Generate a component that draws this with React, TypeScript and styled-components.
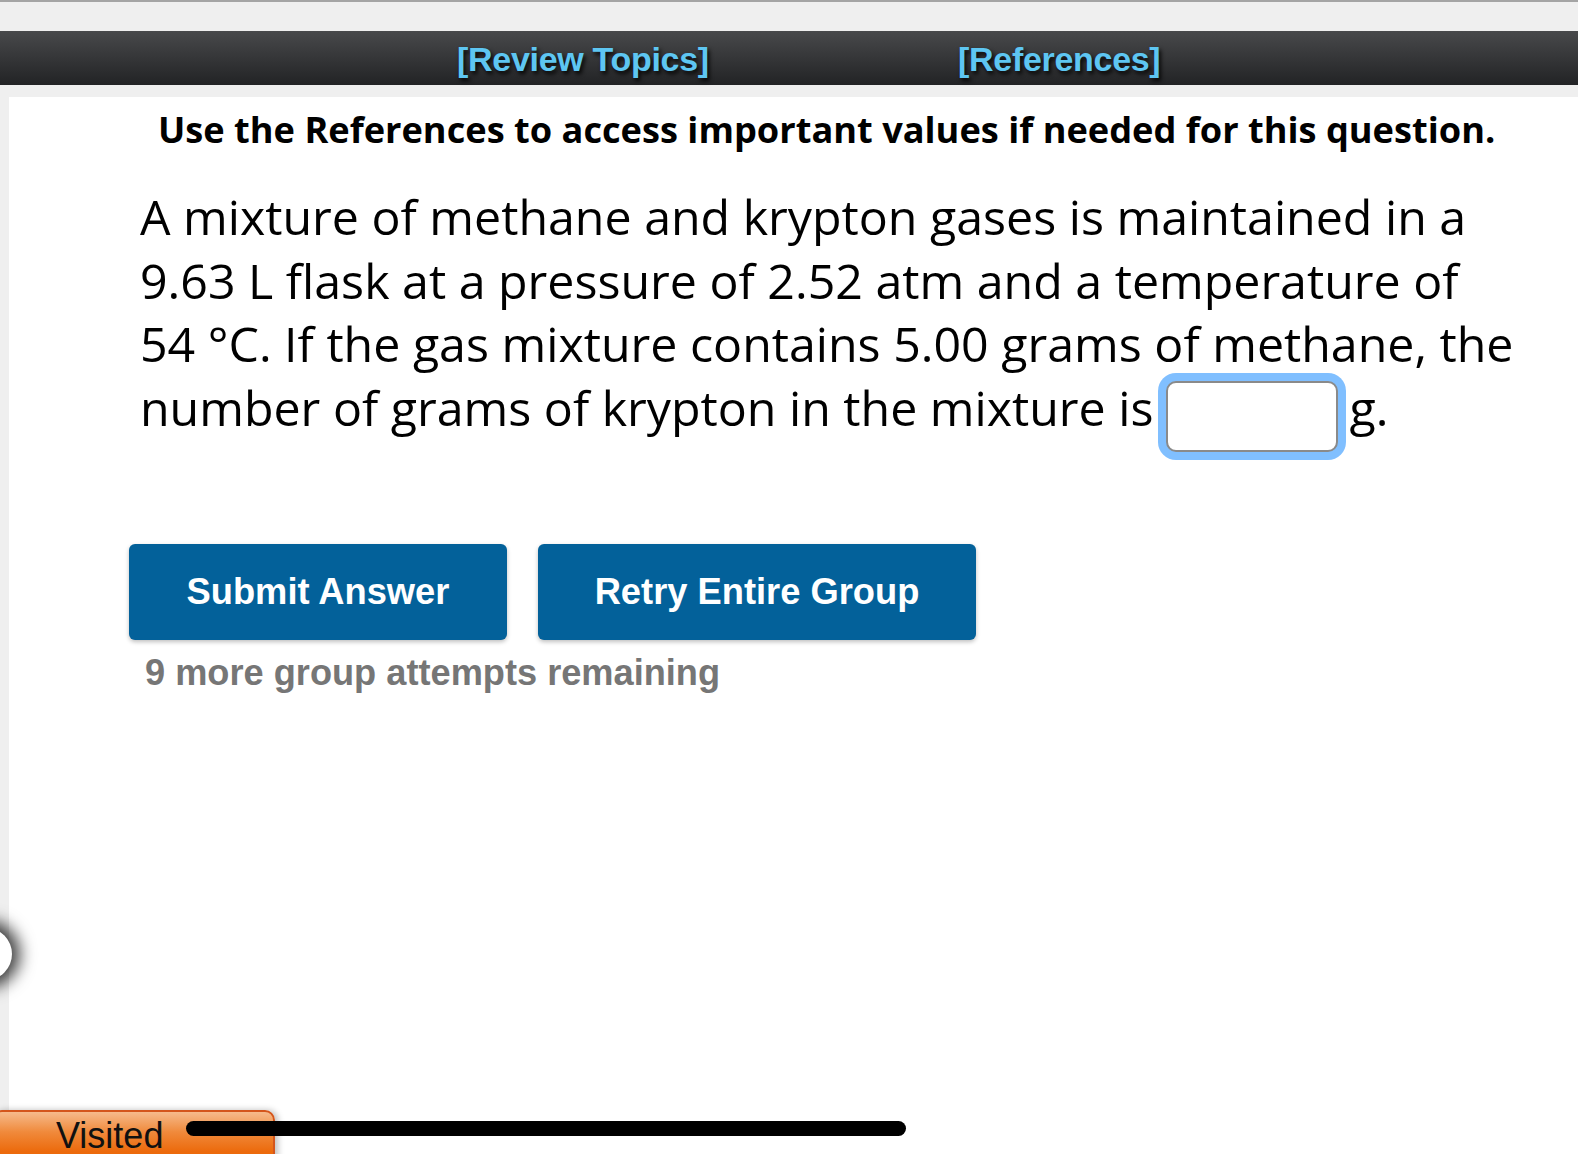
import styled, { createGlobalStyle } from 'styled-components'

const GlobalStyle = createGlobalStyle`
  html, body {
    margin: 0;
    padding: 0;
    background: #efefef;
    overflow: hidden;
  }
  * {
    box-sizing: border-box;
  }
`

const Page = styled.div`
  position: relative;
  display: flex;
  flex-direction: column;
  height: 1154px;
  border-top: 2px solid #a4a4a4;
  overflow: hidden;
`

const TopGap = styled.div`
  height: 29px;
`

const NavBar = styled.nav`
  display: grid;
  grid-template-columns: 457px 501px 1fr;
  align-items: center;
  height: 54px;
  padding-top: 3px;
  background: linear-gradient(#48494b, #222325);
`

const NavLink = styled.a<{ $col: number }>`
  grid-column: ${({ $col }) => $col};
  font-family: 'Liberation Sans', Arial, sans-serif;
  font-weight: 700;
  font-size: 34px;
  color: #5ec6f2;
  text-decoration: none;
  text-shadow: 2px 3px 4px rgba(0, 0, 0, 0.9);
  letter-spacing: -0.3px;
`

const Panel = styled.main`
  flex: 1;
  margin: 12px 0 0 9px;
  background: #fff;
  padding: 10px 0 0;
`

const Notice = styled.h3`
  margin: 0 0 0 149px;
  font-family: 'Open Sans', sans-serif;
  font-weight: 700;
  font-size: 36.2px;
  line-height: 44px;
  color: #000;
`

const Question = styled.p`
  margin: 34px 0 0 131px;
  font-family: 'Open Sans', sans-serif;
  font-size: 48.3px;
  line-height: 63.5px;
  color: #000;
  white-space: nowrap;
`

const AnswerBox = styled.input`
  position: relative;
  top: 3px;
  display: inline-block;
  vertical-align: middle;
  width: 172px;
  height: 71px;
  margin: 2px 11px 0 13px;
  border: 2px solid #8a8a8a;
  border-radius: 10px;
  outline: none;
  box-shadow: 0 0 0 8px #80bfff;
  background: #fff;
`

const ButtonRow = styled.div`
  display: flex;
  gap: 31px;
  margin: 95px 0 0 120px;
`

const ActionButton = styled.button<{ $width: number }>`
  width: ${({ $width }) => $width}px;
  height: 96px;
  border: none;
  border-radius: 6px;
  background: #03619a;
  color: #fff;
  font-family: 'Liberation Sans', Arial, sans-serif;
  font-weight: 700;
  font-size: 36.3px;
  box-shadow: 0 2px 4px rgba(0, 0, 0, 0.25);
  cursor: pointer;
`

const Remaining = styled.div`
  margin: 12px 0 0 136px;
  font-family: 'Liberation Sans', Arial, sans-serif;
  font-weight: 700;
  font-size: 36.2px;
  color: #767676;
`

const EdgeHandle = styled.div`
  position: absolute;
  left: -40px;
  top: 926px;
  width: 52px;
  height: 52px;
  border-radius: 50%;
  background: #fff;
  box-shadow: 0 0 16px 8px rgba(0, 0, 0, 0.75);
`

const VisitedTab = styled.div`
  position: absolute;
  left: -8px;
  top: 1108px;
  width: 283px;
  height: 70px;
  padding: 4px 0 0 62px;
  border: 2px solid #d4561c;
  border-radius: 10px 10px 0 0;
  background: linear-gradient(#f6bb8c 0%, #f08a3c 30%, #ec6a0c 60%, #eb6a08 100%);
  box-shadow: 3px 0 6px rgba(0, 0, 0, 0.25);
  font-family: 'Liberation Sans', Arial, sans-serif;
  font-size: 36px;
  line-height: 40px;
  color: #111;
`

const HomeIndicator = styled.div`
  position: absolute;
  left: 186px;
  top: 1119px;
  width: 720px;
  height: 15px;
  border-radius: 8px;
  background: #000;
`

const App = () => (
  <>
    <GlobalStyle />
    <Page>
      <TopGap />
      <NavBar>
        <NavLink $col={2} href="#">[Review Topics]</NavLink>
        <NavLink $col={3} href="#">[References]</NavLink>
      </NavBar>
      <Panel>
        <Notice>Use the References to access important values if needed for this question.</Notice>
        <Question>
          A mixture of methane and krypton gases is maintained in a
          <br />
          9.63 L flask at a pressure of 2.52 atm and a temperature of
          <br />
          54 °C. If the gas mixture contains 5.00 grams of methane, the
          <br />
          number of grams of krypton in the mixture is
          <AnswerBox type="text" aria-label="answer" />
          g.
        </Question>
        <ButtonRow>
          <ActionButton $width={378}>Submit Answer</ActionButton>
          <ActionButton $width={438}>Retry Entire Group</ActionButton>
        </ButtonRow>
        <Remaining>9 more group attempts remaining</Remaining>
      </Panel>
      <EdgeHandle />
      <VisitedTab>Visited</VisitedTab>
      <HomeIndicator />
    </Page>
  </>
)

export default App
